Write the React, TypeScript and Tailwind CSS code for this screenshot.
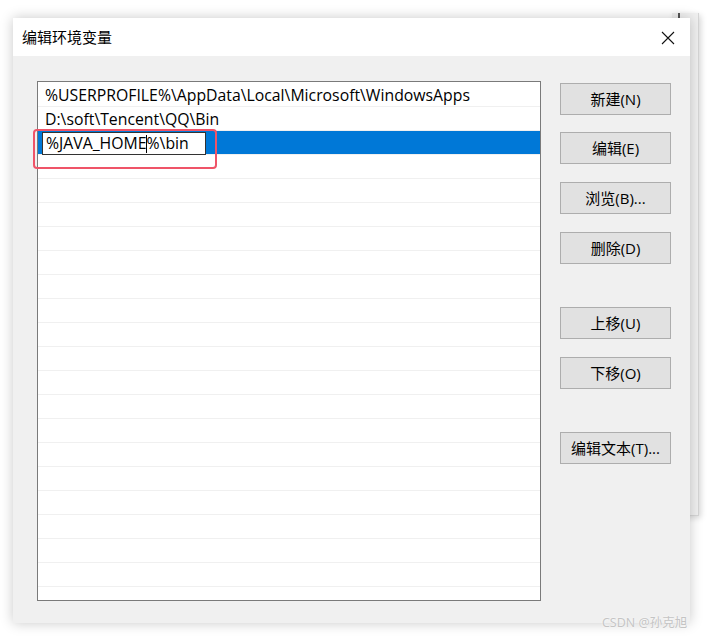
import React from 'react';

const paths = [
  '%USERPROFILE%\\AppData\\Local\\Microsoft\\WindowsApps',
  'D:\\soft\\Tencent\\QQ\\Bin',
];

const buttons: { label: string; gap: string }[] = [
  { label: '新建(N)', gap: 'mt-0' },
  { label: '编辑(E)', gap: 'mt-[17px]' },
  { label: '浏览(B)...', gap: 'mt-[18px]' },
  { label: '删除(D)', gap: 'mt-[18px]' },
  { label: '上移(U)', gap: 'mt-[43px]' },
  { label: '下移(O)', gap: 'mt-[18px]' },
  { label: '编辑文本(T)...', gap: 'mt-[43px]' },
];

const font = { fontFamily: '"Open Sans", "Noto Sans CJK SC", sans-serif' };

function PathList() {
  const empty = Array.from({ length: 19 });
  return (
    <div className="w-[504px] h-[520px] bg-white border border-[#7a7a7a] overflow-hidden pt-px">
      {paths.map((p) => (
        <div key={p} className="h-6 border-b border-[#f0f0f0] pl-[7px] pt-[2px] flex items-center text-[15.8px] text-black whitespace-nowrap">
          {p}
        </div>
      ))}
      {/* selected row, being edited */}
      <div className="h-6 border-b border-[#f0f0f0] bg-[#0078d7] flex items-center pl-[4px]">
        <div className="w-[164px] h-[23px] mt-[2px] bg-white border border-[#333] flex items-center pl-[3px] pt-px text-[15.8px] text-black whitespace-nowrap">
          %JAVA_HOME
          <span className="w-px h-[18px] bg-black -ml-px" />
          %\bin
        </div>
      </div>
      {empty.map((_, i) => (
        <div key={i} className="h-6 border-b border-[#f0f0f0]" />
      ))}
    </div>
  );
}

export default function App() {
  return (
    <div className="relative w-[713px] h-[636px] bg-white overflow-hidden" style={font}>
      {/* parent window peeking out behind the dialog */}
      <div className="absolute left-[672px] top-[13px] w-[27px] h-[503px] bg-[#f0f0f0] border-r border-[#d6d6d6] border-b shadow-[2px_2px_6px_rgba(0,0,0,0.15)]">
        <div className="absolute left-[6px] top-0 w-[2px] h-[6px] bg-[#555]" />
      </div>

      {/* dialog */}
      <div className="absolute left-[13px] top-[18px] w-[677px] h-[605px] flex flex-col shadow-[0_0_12px_rgba(0,0,0,0.22)]">
        <div className="h-[38px] bg-white flex items-center justify-between pl-[9px] pr-[15px] shrink-0">
          <span className="text-[15px] text-black">编辑环境变量</span>
          <svg width="14" height="14" viewBox="0 0 14 14" className="mt-px">
            <path d="M1 1 L13 13 M13 1 L1 13" stroke="#111" strokeWidth="1.1" />
          </svg>
        </div>
        <div className="flex-1 bg-[#f0f0f0] flex pl-[24px] pt-[25px]">
          <PathList />
          <div className="flex flex-col ml-[19px] pt-[2px]">
            {buttons.map((b) => (
              <button
                key={b.label}
                className={`w-[111px] h-[32px] bg-[#e1e1e1] border border-[#adadad] text-[15px] text-black ${b.gap}`}
              >
                {b.label}
              </button>
            ))}
          </div>
        </div>
      </div>

      {/* annotation */}
      <div className="absolute left-[33px] top-[129px] w-[184px] h-[40px] border-2 border-[#ef5468] rounded-[4px]" />

      {/* watermark */}
      <div className="absolute left-[602px] top-[614px] text-[12.5px] text-[#c4c4c4] whitespace-nowrap [text-shadow:0_0_2px_#fff]">
        CSDN @孙克旭
      </div>
    </div>
  );
}
